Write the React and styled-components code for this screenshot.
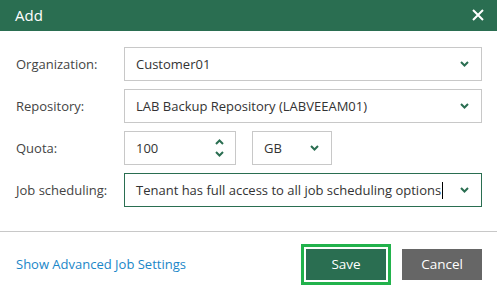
import React from 'react';
import styled, { createGlobalStyle } from 'styled-components';

const GlobalStyle = createGlobalStyle`
  html, body { margin: 0; padding: 0; background: #fff; }
  body { font-family: "Open Sans", "Liberation Sans", sans-serif; }
`;

const Dialog = styled.div`
  width: 497px;
  height: 296px;
  background: #fff;
  display: flex;
  flex-direction: column;
`;

const Header = styled.div`
  height: 31px;
  background: #2a6e51;
  color: #fff;
  display: flex;
  align-items: center;
  justify-content: space-between;
  padding: 0 12px 2px 15px;
  box-sizing: border-box;
  font-size: 15px;
`;

const CloseButton = styled.button`
  border: 0;
  background: none;
  padding: 0;
  width: 14px;
  height: 14px;
  display: flex;
  cursor: pointer;
`;

const Form = styled.div`
  display: flex;
  flex-direction: column;
  gap: 8px;
  padding: 16px 15px 24px 16px;
  border-bottom: 1px solid #c8c8c8;
`;

const Row = styled.div`
  display: flex;
  align-items: center;
  height: 34px;
`;

const Label = styled.div`
  width: 108px;
  font-size: 13px;
  color: #444;
`;

const Field = styled.div`
  box-sizing: border-box;
  height: 34px;
  width: ${p => p.$w || '358px'};
  margin-right: ${p => p.$mr || '0'};
  border: 1px solid ${p => (p.$focus ? '#2a6e51' : '#c8c8c8')};
  display: flex;
  align-items: center;
  justify-content: space-between;
  padding: 0 12px 0 11px;
  font-size: 13px;
  color: #333;
`;

const Value = styled.span`
  display: flex;
  align-items: center;
  white-space: nowrap;
`;

const Caret = styled.span`
  display: inline-block;
  width: 1px;
  height: 17px;
  background: #000;
  margin-left: 1px;
`;

const Spinner = styled.div`
  display: flex;
  flex-direction: column;
  gap: 6px;
  margin-right: -1px;
`;

const Footer = styled.div`
  flex: 1;
  display: flex;
  align-items: center;
  padding: 0 15px 0 16px;
`;

const Link = styled.a`
  color: #1a86c8;
  font-size: 13px;
  text-decoration: none;
  flex: 1;
`;

const Button = styled.button`
  width: 80px;
  height: 31px;
  border: 0;
  font-family: inherit;
  font-size: 13.5px;
  color: #fff;
  background: ${p => (p.$primary ? '#2a6e51' : '#666')};
  outline: ${p => (p.$primary ? '3px solid #22b24c' : 'none')};
  outline-offset: 2px;
  margin-left: ${p => p.$ml || '0'};
  cursor: pointer;
`;

const Chevron = ({ up }) => (
  <svg width="9" height="6" viewBox="0 0 9 6">
    <polyline
      points={up ? '1,5 4.5,1.5 8,5' : '1,1 4.5,4.5 8,1'}
      fill="none"
      stroke="#2a6e51"
      strokeWidth="2"
    />
  </svg>
);

function Select({ value, w, mr, focus, caret }) {
  return (
    <Field $w={w} $mr={mr} $focus={focus}>
      <Value>
        {value}
        {caret && <Caret />}
      </Value>
      <Chevron />
    </Field>
  );
}

export default function App() {
  return (
    <>
      <GlobalStyle />
      <Dialog>
        <Header>
          <span>Add</span>
          <CloseButton>
            <svg width="14" height="14" viewBox="0 0 14 14">
              <path d="M2 2 L12 12 M12 2 L2 12" stroke="#fff" strokeWidth="2" />
            </svg>
          </CloseButton>
        </Header>
        <Form>
          <Row>
            <Label>Organization:</Label>
            <Select value="Customer01" />
          </Row>
          <Row>
            <Label>Repository:</Label>
            <Select value="LAB Backup Repository (LABVEEAM01)" />
          </Row>
          <Row>
            <Label>Quota:</Label>
            <Field $w="112px" $mr="16px">
              <Value>100</Value>
              <Spinner>
                <Chevron up />
                <Chevron />
              </Spinner>
            </Field>
            <Select value="GB" w="80px" />
          </Row>
          <Row>
            <Label>Job scheduling:</Label>
            <Select value="Tenant has full access to all job scheduling options" focus caret />
          </Row>
        </Form>
        <Footer>
          <Link href="#">Show Advanced Job Settings</Link>
          <Button $primary>Save</Button>
          <Button $ml="16px">Cancel</Button>
        </Footer>
      </Dialog>
    </>
  );
}
